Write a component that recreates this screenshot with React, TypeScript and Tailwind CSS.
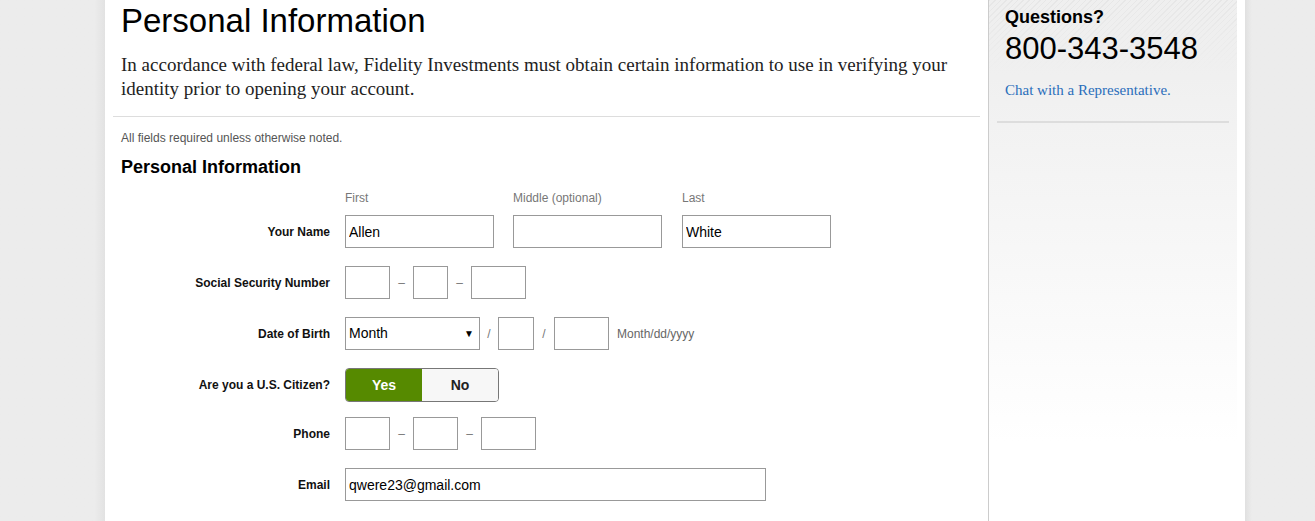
import { ChangeEvent, useState } from "react";

const sans = { fontFamily: '"Liberation Sans", Arial, sans-serif' };
const serif = { fontFamily: '"Liberation Serif", "Times New Roman", serif' };

function Box({ w, value = "" }: { w: string; value?: string }) {
  const [v, setV] = useState(value);
  return (
    <input
      value={v}
      onChange={(e: ChangeEvent<HTMLInputElement>) => setV(e.target.value)}
      className={`${w} h-[33px] border border-[#999] bg-white px-[3px] text-[14px] text-black outline-none`}
      style={sans}
    />
  );
}

function Dash() {
  return <span className="w-[23px] text-center text-[12px] text-[#777]">–</span>;
}

function Row({ label, mt, children }: { label: string; mt: string; children: React.ReactNode }) {
  return (
    <div className={`flex items-center ${mt}`}>
      <div className="w-[240px] pr-[15px] text-right text-[12px] font-bold text-[#111]">
        {label}
      </div>
      <div className="flex items-center">{children}</div>
    </div>
  );
}

export default function App() {
  const [citizen, setCitizen] = useState(true);

  return (
    <div className="flex h-[521px] overflow-hidden bg-[#ededed]" style={sans}>
      <div className="w-[105px] shrink-0 bg-gradient-to-r from-[#ececec] from-90% to-[#e2e2e2]" />

      <div className="flex w-[1140px] shrink-0 bg-white">
        {/* main column */}
        <div className="w-[883px] shrink-0">
          <h1 className="pl-4 pt-[4px] text-[33px] leading-[34px] text-black">Personal Information</h1>
          <p className="mt-[15px] pl-4 pr-8 text-[19px] leading-6 text-[#222]" style={serif}>
            In accordance with federal law, Fidelity Investments must obtain certain information to use in verifying your
            identity prior to opening your account.
          </p>
          <hr className="mx-2 mt-[15px] border-t border-[#ddd]" />
          <p className="mt-[13px] pl-4 text-[12px] leading-4 text-[#555]">
            All fields required unless otherwise noted.
          </p>
          <h2 className="mt-[9px] pl-4 text-[18px] font-bold leading-6 text-black">Personal Information</h2>

          <div className="mt-[11px] flex pl-[240px] text-[12px] leading-4 text-[#777]">
            <span className="w-[168px]">First</span>
            <span className="w-[169px]">Middle (optional)</span>
            <span>Last</span>
          </div>

          <Row label="Your Name" mt="mt-[9px]">
            <div className="flex">
              <Box w="w-[149px]" value="Allen" />
              <div className="w-[19px]" />
              <Box w="w-[149px]" />
              <div className="w-[20px]" />
              <Box w="w-[149px]" value="White" />
            </div>
          </Row>

          <Row label="Social Security Number" mt="mt-[18px]">
            <Box w="w-[45px]" />
            <Dash />
            <Box w="w-[35px]" />
            <Dash />
            <Box w="w-[55px]" />
          </Row>

          <Row label="Date of Birth" mt="mt-[18px]">
            <div className="flex h-[33px] w-[135px] items-center justify-between border border-[#999] px-[3px] text-[14px] text-black">
              <span>Month</span>
              <span className="pr-[2px] text-[10px]">▼</span>
            </div>
            <span className="w-[18px] text-center text-[12px] text-[#777]">/</span>
            <Box w="w-[36px]" />
            <span className="w-[20px] text-center text-[12px] text-[#777]">/</span>
            <Box w="w-[55px]" />
            <span className="ml-2 text-[12px] text-[#666]">Month/dd/yyyy</span>
          </Row>

          <Row label="Are you a U.S. Citizen?" mt="mt-[18px]">
            <div className="flex h-[34px] w-[154px] overflow-hidden rounded-[4px] border border-[#777] text-[14px] font-bold">
              <button
                onClick={() => setCitizen(true)}
                className={`w-[77px] ${citizen ? "bg-[#568a00] text-white" : "bg-[#f7f7f7] text-[#222]"}`}
              >
                Yes
              </button>
              <button
                onClick={() => setCitizen(false)}
                className={`w-[77px] ${!citizen ? "bg-[#568a00] text-white" : "bg-[#f7f7f7] text-[#222]"}`}
              >
                No
              </button>
            </div>
          </Row>

          <Row label="Phone" mt="mt-[15px]">
            <Box w="w-[45px]" />
            <Dash />
            <Box w="w-[45px]" />
            <Dash />
            <Box w="w-[55px]" />
          </Row>

          <Row label="Email" mt="mt-[18px]">
            <Box w="w-[421px]" value="qwere23@gmail.com" />
          </Row>
        </div>

        {/* sidebar */}
        <aside className="relative w-[249px] shrink-0 border-l border-[#ccc] bg-gradient-to-b from-[#efefef] from-10% to-white to-85%">
          <div className="absolute inset-x-0 top-0 h-[70px] bg-[repeating-linear-gradient(135deg,#e6e6e6_0px,#e6e6e6_1px,transparent_1px,transparent_4px)] [mask-image:linear-gradient(to_bottom,black,transparent)]" />
          <div className="relative px-2">
            <h3 className="mt-[5px] pl-2 text-[18px] font-bold leading-6 text-black">Questions?</h3>
            <p className="mt-[3px] pl-2 text-[31px] leading-[34px] text-black">800-343-3548</p>
            <a href="#" className="mt-[15px] block pl-2 text-[15px] leading-[18px] text-[#2a6ebb]" style={serif}>
              Chat with a Representative.
            </a>
            <hr className="mt-[22px] border-t-2 border-[#ddd]" />
          </div>
        </aside>
        <div className="w-[8px] shrink-0" />
      </div>

      <div className="flex-1 bg-gradient-to-r from-[#e0e0e0] to-[#ececec] to-10%" />
    </div>
  );
}
